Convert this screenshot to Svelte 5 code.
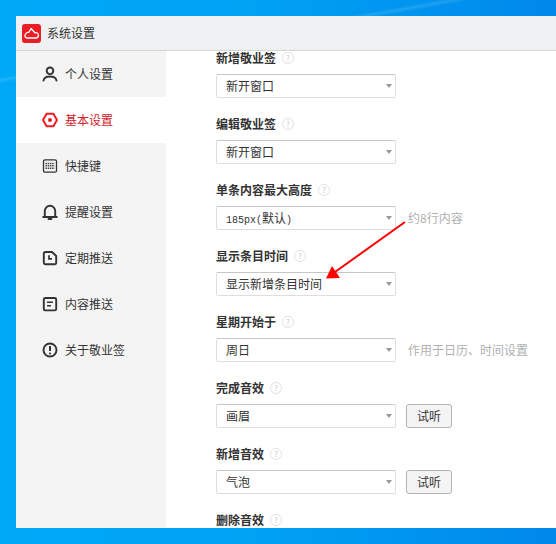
<script>
  const nav = [
    { id: 'user', label: '个人设置' },
    { id: 'basic', label: '基本设置', active: true },
    { id: 'keys', label: '快捷键' },
    { id: 'bell', label: '提醒设置' },
    { id: 'clock', label: '定期推送' },
    { id: 'doc', label: '内容推送' },
    { id: 'info', label: '关于敬业签' }
  ];

  const fields = [
    { label: '新增敬业签', value: '新开窗口' },
    { label: '编辑敬业签', value: '新开窗口' },
    { label: '单条内容最大高度', value: '默认', px: true, hint: '约8行内容' },
    { label: '显示条目时间', value: '显示新增条目时间' },
    { label: '星期开始于', value: '周日', hint: '作用于日历、时间设置' },
    { label: '完成音效', value: '画眉', test: true },
    { label: '新增音效', value: '气泡', test: true },
    { label: '删除音效' }
  ];
</script>

<div class="desktop">
  <div class="window">
    <header class="titlebar">
      <svg class="logo" width="19" height="19" viewBox="0 0 19 19">
        <rect width="19" height="19" rx="3" fill="#ec1c24" />
        <path d="M5 14C2.800 14 2 11 4 9.800 4.300 8.500 5.500 8 6.800 8.500L9 4.500l4 4.300c1.500-.6 3.500.3 3.500 2.500S15 14 13.500 14z" fill="none" stroke="#fff" stroke-width="1.300" stroke-linejoin="round" />
      </svg>
      <span class="txt">系统设置</span>
    </header>

    <div class="body">
      <nav class="sidebar">
        {#each nav as item}
          <div class="nav-item" class:active={item.active}>
            <svg width="16" height="16" viewBox="0 0 16 16" fill="none" stroke="#333" stroke-width="1.900">
              {#if item.id === 'user'}
                <circle cx="8" cy="4.800" r="3.300" />
                <path d="M1.500 14.600c.5-3 3-4.100 6.500-4.100s6 1.100 6.500 4.100" stroke-linecap="round" />
              {:else if item.id === 'basic'}
                <path d="M4.600 1.800h6.800L15 8l-3.600 6.200H4.600L1 8z" stroke="#ec1c24" stroke-width="2" />
                <circle cx="8" cy="8" r="2" fill="#ec1c24" stroke="none" />
              {:else if item.id === 'keys'}
                <rect x="1.500" y="1.800" width="13" height="12.400" rx="1.500" stroke-width="1.300" />
                <path d="M3.500 5.500h9M3.500 7.800h9M3.500 10.200h9" stroke-width="1.400" stroke-dasharray="1.500 .7" stroke="#444" />
              {:else if item.id === 'bell'}
                <path d="M2.800 13V7a5.200 5.200 0 0 1 10.400 0v6" />
                <path d="M1.200 13h13.600" stroke-linecap="round" />
                <path d="M6.500 15h3" stroke-linecap="round" />
              {:else if item.id === 'clock'}
                <path d="M3.500 2H10l4.200 4v6.500c0 1-.7 1.800-1.700 1.800h-9c-1 0-1.700-.8-1.700-1.800V3.800C1.800 2.800 2.500 2 3.500 2z" />
                <path d="M7 5.200v3.600h3" stroke-width="1.700" />
              {:else if item.id === 'doc'}
                <rect x="1.800" y="2" width="12.400" height="12.400" rx="1.500" />
                <path d="M5 6.200h6M5 9.800h4" stroke-width="1.600" />
              {:else}
                <circle cx="8" cy="8" r="6.500" />
                <path d="M8 4v5" stroke-width="2" />
                <circle cx="8" cy="11.500" r="1.100" fill="#333" stroke="none" />
              {/if}
            </svg>
            <span class="txt">{item.label}</span>
          </div>
        {/each}
      </nav>

      <main class="content">
        {#each fields as field}
          <section class="field">
            <div class="field-label">
              <b>{field.label}</b>
              <span class="help">?</span>
            </div>
            {#if field.value}
              <div class="field-row">
                <div class="select">
                  <span class="txt">
                    {#if field.px}<span class="latin">185px(</span>{field.value}<span class="latin">)</span>{:else}{field.value}{/if}
                  </span>
                  <i class="caret"></i>
                </div>
                {#if field.hint}
                  <span class="hint txt">{field.hint}</span>
                {/if}
                {#if field.test}
                  <button type="button" class="test">试听</button>
                {/if}
              </div>
            {/if}
          </section>
        {/each}
      </main>

      <!-- annotation drawn over the screenshot -->
      <svg class="arrow" width="84" height="66" viewBox="0 0 84 66">
        <path d="M79 4 9 54" stroke="#f00" stroke-width="2" fill="none" />
        <path d="M0 60.500 6 48l8 12z" fill="#f00" />
      </svg>
    </div>
  </div>
</div>

<style>
  :global(body) {
    margin: 0;
  }

  .desktop {
    width: 556px;
    height: 544px;
    box-sizing: border-box;
    padding: 16px 0 16px 16px;
    overflow: hidden;
    background:
      linear-gradient(170deg, transparent 0, transparent 12%, rgba(255, 255, 255, 0.12) 12.500%, transparent 13%),
      linear-gradient(90deg, #00a8f8 0, #00a2f4 45%, #0088ea 100%);
    font-family: "Noto Sans CJK SC", sans-serif;
    font-size: 12px;
    color: #333;
  }

  .window {
    width: 540px;
    height: 512px;
    display: flex;
    flex-direction: column;
    background: #fff;
  }

  .titlebar {
    flex: none;
    height: 34px;
    display: flex;
    align-items: center;
    gap: 6px;
    padding-left: 6px;
    background: #eff0f2;
    border-bottom: 1px solid #d6d6d6;
  }

  /* Noto sits a pixel lower than the original face */
  .txt {
    padding-bottom: 2px;
  }

  .body {
    position: relative;
    flex: 1;
    display: flex;
    min-height: 0;
  }

  /* ─── Sidebar ─────────────────────────────────────────────── */

  .sidebar {
    flex: none;
    width: 150px;
    background: #f4f4f4;
  }

  .nav-item {
    height: 46px;
    display: flex;
    align-items: center;
    gap: 7px;
    padding-left: 26px;
  }

  .nav-item.active {
    background: #fff;
    color: #d0232a;
  }

  /* ─── Settings column ─────────────────────────────────────── */

  .content {
    flex: 1;
    min-width: 0;
    overflow: hidden;
    padding-left: 50px;
  }

  .field {
    height: 66px;
  }

  .field-label {
    height: 14px;
    margin-bottom: 9px;
    display: flex;
    align-items: center;
    gap: 6px;
    line-height: 14px;
  }

  .field-label b {
    font-weight: 700;
  }

  .help {
    width: 10px;
    height: 10px;
    border: 1px solid #e2e2e2;
    border-radius: 50%;
    display: flex;
    align-items: center;
    justify-content: center;
    font-size: 8px;
    line-height: 1;
    color: #cccccc;
  }

  .field-row {
    display: flex;
    align-items: center;
    height: 24px;
  }

  .select {
    width: 180px;
    height: 24px;
    box-sizing: border-box;
    display: flex;
    align-items: center;
    justify-content: space-between;
    padding: 0 3px 0 9px;
    background: #fff;
    border: 1px solid #dedede;
    border-top-color: #c6c6c6;
    border-radius: 2px;
  }

  .latin {
    font-family: "Liberation Mono", monospace;
    font-size: 10px;
  }

  .caret {
    width: 0;
    height: 0;
    border-left: 3.500px solid transparent;
    border-right: 3.500px solid transparent;
    border-top: 4px solid #999;
  }

  .hint {
    margin-left: 12px;
    color: #b0b0b0;
    white-space: nowrap;
  }

  .test {
    width: 46px;
    height: 24px;
    margin-left: 10px;
    padding: 0 0 2px;
    box-sizing: border-box;
    background: #f4f4f4;
    border: 1px solid #b4b4b4;
    border-radius: 3px;
    font: inherit;
    color: #333;
  }

  .arrow {
    position: absolute;
    left: 310px;
    top: 167px;
  }
</style>
